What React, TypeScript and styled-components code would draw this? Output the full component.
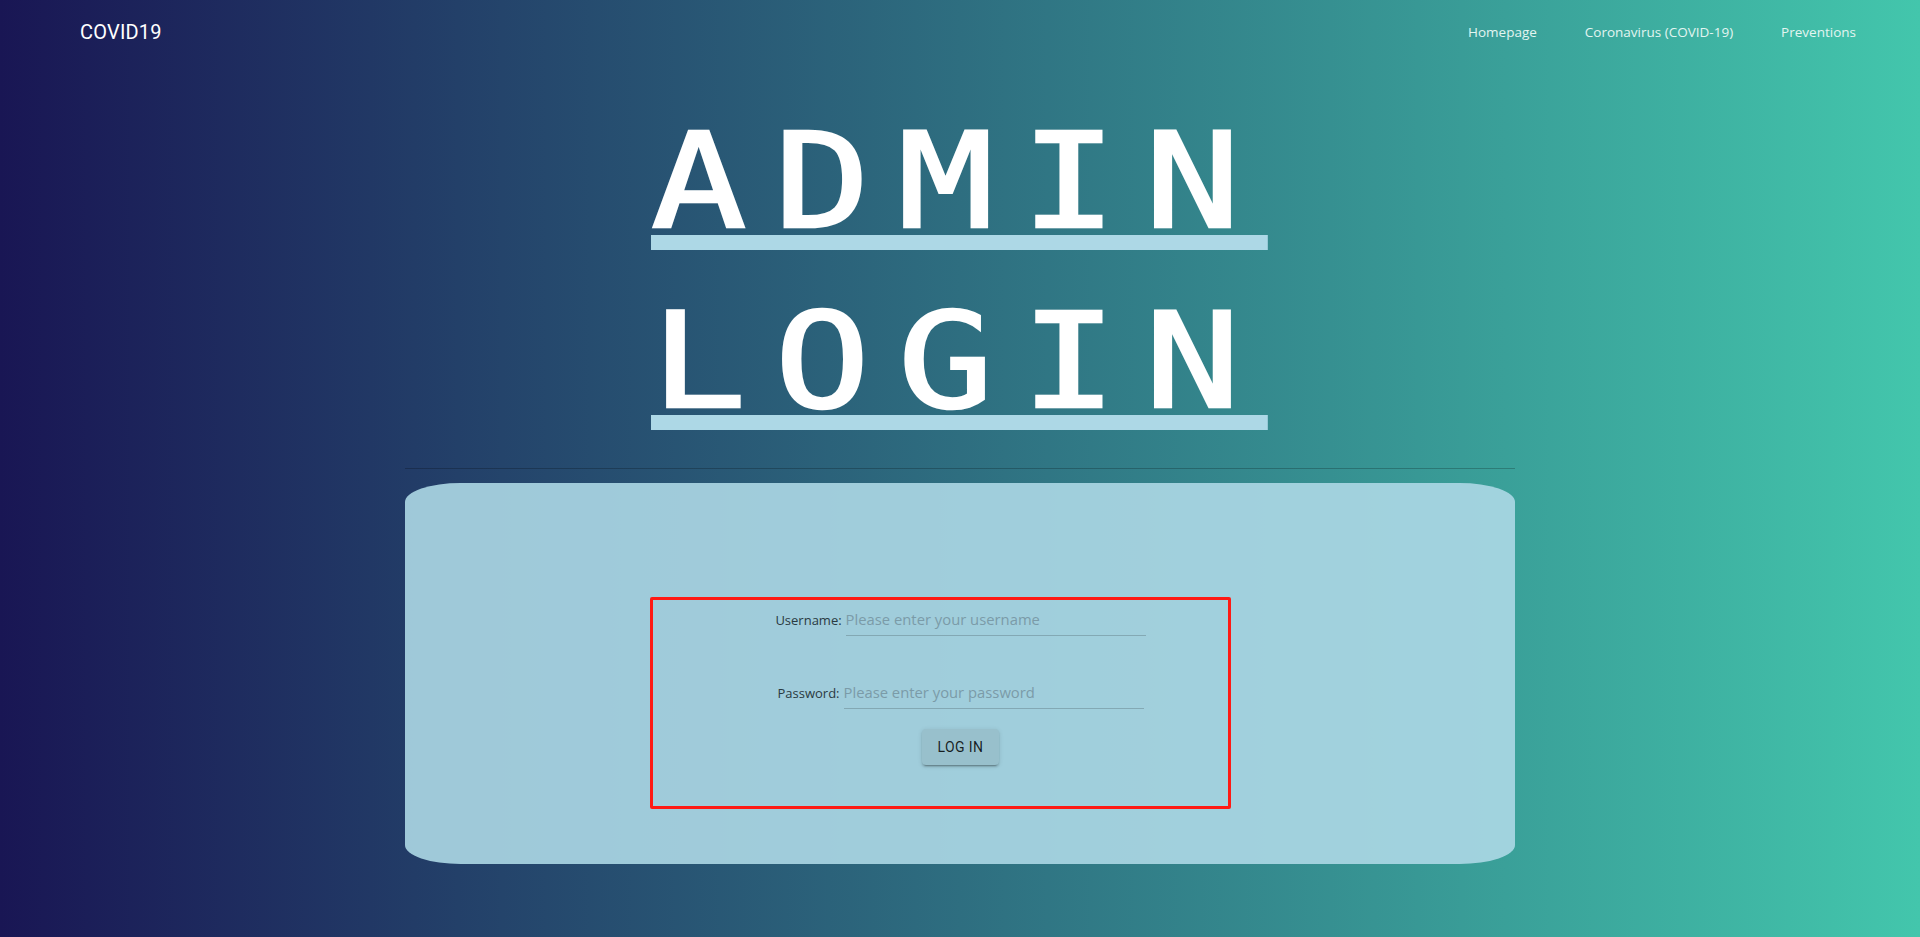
import styled, { createGlobalStyle } from 'styled-components';

// Global
const GlobalStyle = createGlobalStyle`
  html, body {
    margin: 0;
    padding: 0;
  }

  body {
    font-family: 'Open Sans', 'Noto Sans', sans-serif;
    background: linear-gradient(to right, #191654, #43c6ac);
    min-height: 937px;
  }
`;

interface GapProps {
  $gap?: number;
}

// Styled Components
const Page = styled.div`
  min-height: 937px;
  display: flex;
  flex-direction: column;
`;

const NavBar = styled.header`
  height: 64px;
  display: flex;
  align-items: center;
  justify-content: space-between;
  padding: 0 40px 0 80px;
`;

const Brand = styled.div`
  font-family: Roboto, 'Liberation Sans', sans-serif;
  font-size: 20px;
  color: #ffffff;
  letter-spacing: 0.2px;
`;

const NavLinks = styled.nav`
  display: flex;
  align-items: center;
`;

const NavLink = styled.a`
  font-family: 'Open Sans', 'Noto Sans', sans-serif;
  font-size: 13.5px;
  color: #e3f5f1;
  padding: 0 24px;
  text-decoration: none;
  cursor: pointer;
`;

const Main = styled.main`
  width: 1110px;
  margin: 0 auto;
  display: flex;
  flex-direction: column;
`;

const TitleBlock = styled.div`
  display: flex;
  flex-direction: column;
  align-items: flex-start;
  padding-left: 246px;
  margin-top: 64px;
`;

// wide monospace look: regular mono stretched sideways
const Title = styled.h1<GapProps>`
  margin: ${props => props.$gap ?? 0}px 0 0;
  font-family: 'DejaVu Sans Mono', 'Liberation Mono', monospace;
  font-weight: 400;
  font-size: 132px;
  line-height: 107px;
  letter-spacing: 23.4px;
  color: #ffffff;
  -webkit-text-stroke: 2.5px #ffffff;
  border-bottom: 15px solid #add8e6;
  transform: scaleX(1.2);
  transform-origin: left center;
`;

const Divider = styled.hr`
  margin: 38px 0 0;
  border: none;
  border-top: 1px solid rgba(0, 0, 0, 0.22);
`;

const Card = styled.section`
  margin-top: 14px;
  height: 381px;
  box-sizing: border-box;
  border-radius: 5%;
  background: rgba(173, 216, 230, 0.9);
  padding: 114px 0 0 245px;
`;

const FormBox = styled.form`
  width: 581px;
  height: 212px;
  box-sizing: border-box;
  border: 3px solid #ff1a14;
  border-radius: 2px;
  padding: 4px 0 0 40px;
  display: flex;
  flex-direction: column;
  align-items: center;
`;

const FieldRow = styled.div<GapProps>`
  display: flex;
  align-items: baseline;
  gap: 4px;
  margin-top: ${props => props.$gap ?? 0}px;
`;

const Label = styled.label`
  font-family: 'Open Sans', 'Noto Sans', sans-serif;
  font-size: 13px;
  color: #2a3a42;
`;

const Input = styled.input`
  width: 300px;
  height: 32px;
  box-sizing: border-box;
  padding: 0 0 2px;
  border: none;
  border-bottom: 1px solid rgba(0, 0, 0, 0.18);
  background: transparent;
  outline: none;
  font-family: 'Open Sans', 'Noto Sans', sans-serif;
  font-size: 14.8px;
  color: #2a3a42;

  &::placeholder {
    color: #7b9ba8;
  }
`;

const LoginButton = styled.button`
  margin-top: 20px;
  height: 36px;
  padding: 0 16px;
  border: none;
  border-radius: 4px;
  background: #98c0cc;
  font-family: Roboto, 'Liberation Sans', sans-serif;
  font-size: 14px;
  font-weight: 400;
  letter-spacing: 0.4px;
  color: rgba(0, 0, 0, 0.85);
  box-shadow: 0 3px 1px -2px rgba(0,0,0,0.2), 0 2px 2px 0 rgba(0,0,0,0.14), 0 1px 5px 0 rgba(0,0,0,0.12);
  cursor: pointer;
`;

const links = ['Homepage', 'Coronavirus (COVID-19)', 'Preventions'];

const App = () => {
  return (
    <Page>
      <GlobalStyle />
      <NavBar>
        <Brand>COVID19</Brand>
        <NavLinks>
          {links.map(link => (
            <NavLink key={link}>{link}</NavLink>
          ))}
        </NavLinks>
      </NavBar>

      <Main>
        <TitleBlock>
          <Title>ADMIN</Title>
          <Title $gap={58}>LOGIN</Title>
        </TitleBlock>
        <Divider />
        <Card>
          <FormBox onSubmit={e => e.preventDefault()}>
            <FieldRow>
              <Label htmlFor="username">Username:</Label>
              <Input id="username" placeholder="Please enter your username" />
            </FieldRow>
            <FieldRow $gap={41}>
              <Label htmlFor="password">Password:</Label>
              <Input id="password" type="password" placeholder="Please enter your password" />
            </FieldRow>
            <LoginButton type="submit">LOG IN</LoginButton>
          </FormBox>
        </Card>
      </Main>
    </Page>
  );
};

export default App;
